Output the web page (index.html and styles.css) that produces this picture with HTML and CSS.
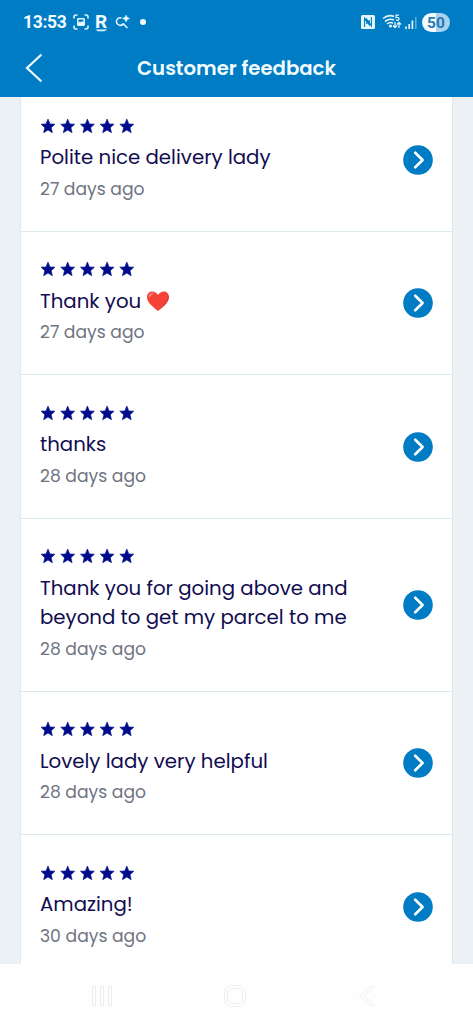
FILE: index.html
```
<!DOCTYPE html>
<html lang="en">
<head>
<meta charset="utf-8">
<meta name="viewport" content="width=device-width, initial-scale=1">
<title>Customer feedback</title>
<link rel="stylesheet" href="styles.css">
</head>
<body>
<svg class="defs" aria-hidden="true">
  <symbol id="stars" viewBox="0 0 96 16">
    <path id="star" d="M8 1 10 5.900 15 6.200 11.200 9.700 12.400 14.700 8 12.100 3.600 14.700 4.800 9.700 1 6.200 6 5.900Z" stroke-width=".6" stroke-linejoin="round" stroke="currentColor" fill="currentColor"/>
    <use href="#star" x="19.7"/><use href="#star" x="39.4"/><use href="#star" x="59.1"/><use href="#star" x="78.8"/>
  </symbol>
  <symbol id="go" viewBox="0 0 30 30">
    <circle cx="15" cy="15" r="14.8" fill="#007cc4"/>
    <path d="M12.200 7.700 19.600 15l-7.400 7.300" fill="none" stroke="#fff" stroke-width="2.600" stroke-linecap="round" stroke-linejoin="round"/>
  </symbol>
</svg>
<div class="screen">
  <header class="top">
    <div class="status">
      <div class="status-left">
        <span class="time">13:53</span>
        <svg class="capture" viewBox="0 0 16 16"><path d="M1 4.500V3a2 2 0 0 1 2-2h1.500M11.500 1H13a2 2 0 0 1 2 2v1.500M15 11.500V13a2 2 0 0 1-2 2h-1.500M4.500 15H3a2 2 0 0 1-2-2v-1.500" fill="none" stroke="#e4f5fc" stroke-width="1.600"/><path fill-rule="evenodd" d="M5 4h6l1 1v6l-1 1H5l-1-1V5ZM5.500 5.500v3l1.500-1 1 .8 1.500-1.300 1 1V5.500Z" fill="#e4f5fc"/></svg>
        <span class="r-mark">R<svg viewBox="0 0 14 3"><path d="M.5.4h13L10 2.400H3Z" fill="#e4f5fc"/></svg></span>
        <svg class="search" viewBox="0 0 16 16"><path d="M7 3.200A4 4 0 1 0 9.200 8.700M8.600 9.200l4.700 4.600" fill="none" stroke="#e4f5fc" stroke-width="1.600"/><path d="M11.800 0q.5 3 3.700 3.700-3.200.7-3.700 3.700-.5-3-3.700-3.700Q11.300 3 11.800 0Z" fill="#e4f5fc" stroke="#e4f5fc" stroke-width=".5"/></svg>
        <span class="dot"></span>
      </div>
      <div class="status-right">
        <svg class="nfc" viewBox="0 0 14 14"><rect width="14" height="14" rx="1.500" fill="#e4f5fc"/><path d="M3.600 12V3.300L8.300 9.700V5M10.400 2v8.700L5.700 4.300V9" fill="none" stroke="#007cc4" stroke-width="1.100"/></svg>
        <svg class="wifi" viewBox="0 0 20 16"><path d="M1 4.500Q6.500 0 12 2.500M3 7.500Q7.500 4 12 6M5 10q3-2.400 6-.8" fill="none" stroke="#e4f5fc" stroke-width="1.600"/><circle cx="8.500" cy="12" r="1.600" fill="#e4f5fc"/><path d="M17 1.200h-3v2.400q3-.5 3 1.300 0 1.800-3 1.300" fill="none" stroke="#e4f5fc" stroke-width="1.200"/><path d="M13 8v5.500m-2-2 2 2 2-2M17 14V8.500m-2 2 2-2 2 2" fill="none" stroke="#e4f5fc" stroke-width="1.300"/></svg>
        <svg class="signal" viewBox="0 0 12 13"><path d="M1 13v-2.500M4.200 13V8M7.400 13V4.500" stroke="#e4f5fc" stroke-width="1.700"/><path d="M10.800 13V1" stroke="#69b4df" stroke-width="1.400"/></svg>
        <span class="battery">50</span>
      </div>
    </div>
    <div class="bar">
      <svg class="back" viewBox="0 0 18 30"><path d="M16.500 1.500 2 15l14.500 13.500" fill="none" stroke="#eefaff" stroke-width="2.200"/></svg>
      <h1>Customer feedback</h1>
    </div>
  </header>
  <main class="list">
    <article class="row first"><div class="copy"><svg class="stars"><use href="#stars"/></svg><p class="msg">Polite nice delivery lady</p><p class="date">27 days ago</p></div><svg class="go"><use href="#go"/></svg></article>
    <article class="row"><div class="copy"><svg class="stars"><use href="#stars"/></svg><p class="msg">Thank you <svg class="heart" viewBox="0 0 24 22"><path d="M12 21C8 17.500 1 13 1 7 1 .6 9-.7 12 5 15-.7 23 .6 23 7c0 6-7 10.500-11 14Z" fill="#f44336"/><path d="M3.500 6.500Q4.300 3.800 6.800 3.500" fill="none" stroke="#ff8a78" stroke-width="1.600" stroke-linecap="round"/><path d="M22.600 5C23.500 12 17 17 12 21q9-9 10.600-16Z" fill="#d93a30"/></svg></p><p class="date">27 days ago</p></div><svg class="go"><use href="#go"/></svg></article>
    <article class="row"><div class="copy"><svg class="stars"><use href="#stars"/></svg><p class="msg">thanks</p><p class="date">28 days ago</p></div><svg class="go"><use href="#go"/></svg></article>
    <article class="row"><div class="copy"><svg class="stars"><use href="#stars"/></svg><p class="msg">Thank you for going above and<br>beyond to get my parcel to me</p><p class="date">28 days ago</p></div><svg class="go"><use href="#go"/></svg></article>
    <article class="row"><div class="copy"><svg class="stars"><use href="#stars"/></svg><p class="msg">Lovely lady very helpful</p><p class="date">28 days ago</p></div><svg class="go"><use href="#go"/></svg></article>
    <article class="row"><div class="copy"><svg class="stars"><use href="#stars"/></svg><p class="msg">Amazing!</p><p class="date">30 days ago</p></div><svg class="go"><use href="#go"/></svg></article>
  </main>
  <nav class="nav">
    <svg viewBox="0 0 24 24"><path d="M2.500 2h3v20h-3ZM10.500 2h3v20h-3ZM18.500 2h3v20h-3Z"/></svg>
    <svg viewBox="0 0 24 24"><rect x="1.500" y="1.500" width="21" height="21" rx="7"/><rect x="4.500" y="4.500" width="15" height="15" rx="4.500"/></svg>
    <svg viewBox="0 0 24 24"><path d="M17 1.500 4.500 12 17 22.500l2-2L9 12l10-8.500Z"/></svg>
  </nav>
</div>
</body>
</html>
```
FILE: styles.css
```
* { box-sizing: border-box; }
body { margin: 0; font-family: Poppins, Inter, "Open Sans", sans-serif; background: #fff; }
h1, p { margin: 0; font-weight: 400; white-space: nowrap; }
svg { display: block; flex: none; }
.defs { position: absolute; width: 0; height: 0; }
.screen { width: 473px; height: 1024px; display: flex; flex-direction: column; overflow: hidden; }
.top { height: 97px; flex: none; background: #007cc4; color: #f2fbff; }
.status { height: 44px; display: flex; justify-content: space-between; padding: 0 23px; }
.status-left, .status-right { display: flex; align-items: center; }
.time { font: 700 17.5px Roboto, sans-serif; width: 50px; letter-spacing: -.3px; }
.capture { width: 16px; height: 16px; }
.r-mark { margin-left: 6px; font: 700 19px/15px Roboto, sans-serif; width: 13px; padding-top: 1px; }
.r-mark svg { width: 13px; height: 3px; }
.search { margin-left: 7px; width: 15px; height: 15px; }
.dot { margin-left: 10px; width: 6px; height: 6px; border-radius: 50%; background: #f2fbff; }
.nfc { width: 14px; height: 14px; }
.wifi { margin-left: 7px; width: 20px; height: 16px; }
.signal { margin-left: 3px; width: 12px; height: 13px; }
.battery { margin-left: 5px; width: 28px; height: 19px; border-radius: 10px; background: linear-gradient(90deg, #f0faff 50%, #acd1ee 50%); color: #2679b4; font: 700 15.5px/20px Roboto, sans-serif; text-align: center; }
.bar { height: 53px; display: flex; padding: 9px 25px; }
.back { width: 18px; height: 30px; }
h1 { margin-left: 94px; font-size: 19.7px; line-height: 30px; font-weight: 600; }
.list { flex: 1; min-height: 0; overflow: hidden; background: #ebf1f5; padding: 0 20px; }
.row { min-height: 143.7px; padding: 29.4px 19px 26.6px; display: flex; align-items: center; justify-content: space-between; background: #fff; border: 1px solid #dce9ef; border-top: 0; }
.row.first { margin-top: -9px; }
.stars { width: 96px; height: 16px; margin-left: -.5px; color: #000b8c; }
.msg { margin-top: 9.1px; font-size: 19.75px; line-height: 29.7px; color: #110d50; }
.date { margin-top: 1.2px; font-size: 17.2px; line-height: 30px; color: #707482; }
.row:first-child .msg { font-size: 19.75px; }
.heart { display: inline-block; width: 24px; height: 22px; vertical-align: -4px; }
.go { width: 30px; height: 30px; margin-top: -2px; }
.nav { height: 60px; flex: none; background: #fefefe; display: flex; justify-content: space-between; align-items: center; padding: 4px 94px 0 90px; }
.nav svg { width: 24px; height: 24px; fill: none; stroke: #eeeeee; stroke-width: 1; }
```
